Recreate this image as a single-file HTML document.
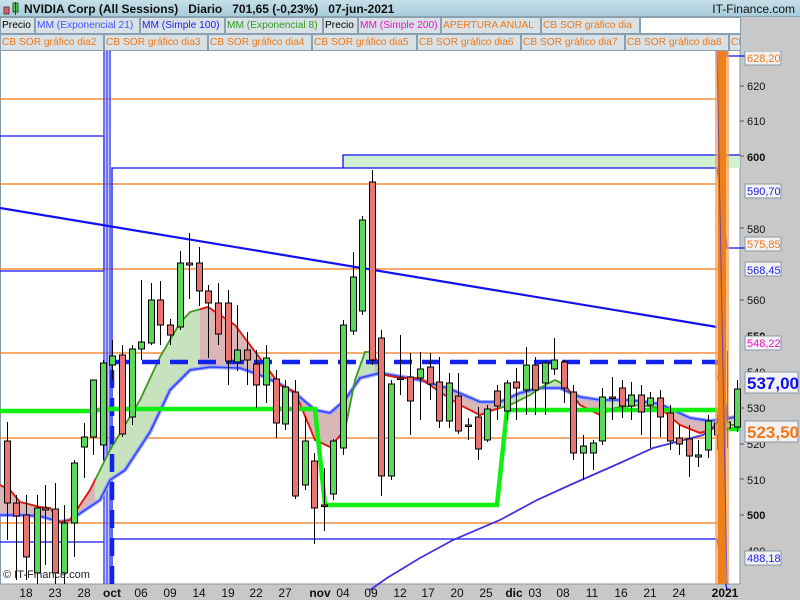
<!DOCTYPE html>
<html><head><meta charset="utf-8"><style>
*{margin:0;padding:0;box-sizing:border-box}
body{width:800px;height:600px;overflow:hidden;background:#fff;font-family:"Liberation Sans",sans-serif;position:relative}
#hdr{position:absolute;left:0;top:0;width:800px;height:17px;background:linear-gradient(#c6e0ea,#a9cbd9);border-bottom:1px solid #8aa3b0}
#hdr .t{position:absolute;left:24px;top:2px;font-size:12px;color:#111;white-space:pre}
#hdr .r{position:absolute;right:5px;top:2px;font-size:12px;color:#111}
.row{position:absolute;left:0;height:17px;width:800px;background:#c8c8c8}
.c{position:absolute;top:0;height:17px;border:1px solid #8aa0b0;background:#d8e2e6;font-size:10.2px;line-height:15px;padding-left:1px;white-space:nowrap;overflow:hidden}
.o{color:#f07818}
</style></head><body>
<div id="hdr">
<svg style="position:absolute;left:3px;top:2px" width="18" height="14"><rect x="1" y="5" width="5" height="7" fill="#e06060" stroke="#333" stroke-width="0.8"/><rect x="10" y="1" width="5" height="9" fill="#44cc44" stroke="#333" stroke-width="0.8"/><line x1="12.5" y1="0" x2="12.5" y2="13" stroke="#333"/></svg>
<div class="t"><b style="font-weight:600">NVIDIA Corp (All Sessions)   Diario   701,65 (-0,23%)   07-jun-2021</b></div>
<div class="r">IT-Finance.com</div></div>
<div class="row" style="top:17px">
<div class="c" style="left:0;width:35px">Precio</div>
<div class="c" style="left:35px;width:105px;color:#4455ff">MM (Exponencial 21)</div>
<div class="c" style="left:140px;width:85px;color:#2222ee">MM (Simple 100)</div>
<div class="c" style="left:225px;width:98px;color:#339922">MM (Exponencial 8)</div>
<div class="c" style="left:323px;width:35px">Precio</div>
<div class="c" style="left:358px;width:83px;color:#ee11cc">MM (Simple 200)</div>
<div class="c o" style="left:441px;width:100px">APERTURA ANUAL</div>
<div class="c o" style="left:541px;width:99px">CB SOR gráfico dia</div>
<div class="c" style="left:640px;width:101px;background:#fff"></div>
</div>
<div class="row" style="top:34px">
<div class="c o" style="left:0;width:104px">CB SOR gráfico dia2</div>
<div class="c o" style="left:104px;width:104px">CB SOR gráfico dia3</div>
<div class="c o" style="left:208px;width:104px">CB SOR gráfico dia4</div>
<div class="c o" style="left:312px;width:105px">CB SOR gráfico dia5</div>
<div class="c o" style="left:417px;width:104px">CB SOR gráfico dia6</div>
<div class="c o" style="left:521px;width:104px">CB SOR gráfico dia7</div>
<div class="c o" style="left:625px;width:104px">CB SOR gráfico dia8</div>
<div class="c o" style="left:729px;width:12px">CB</div>
</div>
<svg id="ch" style="position:absolute;left:0;top:51px" width="800" height="549" viewBox="0 51 800 549" font-family="Liberation Sans, sans-serif">
<rect x="740" y="51" width="60" height="549" fill="#c8c8c8"/>
<rect x="0" y="584" width="800" height="16" fill="#c8c8c8"/>
<line x1="740" y1="51" x2="740" y2="584" stroke="#8899a6"/>
<line x1="0" y1="584" x2="740" y2="584" stroke="#8899a6"/>
<line x1="0.5" y1="51" x2="0.5" y2="584" stroke="#8899a6"/>
<rect x="343" y="155" width="397" height="13" fill="#d0f2d2"/>
<g stroke="#f07818" stroke-width="1.2"><line x1="0" y1="99" x2="717" y2="99"/><line x1="0" y1="184" x2="717" y2="184"/><line x1="0" y1="269" x2="717" y2="269"/><line x1="0" y1="353" x2="717" y2="353"/><line x1="0" y1="438" x2="717" y2="438"/><line x1="0" y1="523" x2="717" y2="523"/></g>
<g stroke="#1111ee" stroke-width="1.3" fill="none">
<polyline points="0,136 104,136 104,271 0,271"/>
<line x1="0" y1="542" x2="104" y2="542"/>
<polyline points="112,584 112,168 717,168 727,248 745,248"/>
<polyline points="343,168 343,155 740,155"/>
<polyline points="112,539 717,539 727,590"/>
<polyline points="727,51 727,56 745,56"/>
</g>
<rect x="103" y="51" width="8" height="533" fill="#8890ff" opacity="0.5"/>
<g stroke="#2222ee" stroke-width="1"><line x1="104" y1="51" x2="104" y2="584"/><line x1="107" y1="51" x2="107" y2="584"/><line x1="110" y1="51" x2="110" y2="584"/></g>
<line x1="0" y1="208" x2="717" y2="327" stroke="#1111ee" stroke-width="2.2"/>
<clipPath id="rc"><rect x="0" y="0" width="95" height="600"/><rect x="200" y="0" width="140" height="600"/><rect x="375" y="0" width="125" height="600"/><rect x="565" y="0" width="40" height="600"/><rect x="660" y="0" width="60" height="600"/></clipPath>
<polygon fill="#c6e3bd" points="0,485 10,490 20,502 40,507 50,508 60,522 70,520 90,490 110,450 125,425 140,400 160,357 170,340 180,323 190,312 208,307 220,315 235,325 250,345 265,365 280,385 295,392 315,440 330,447 345,430 355,380 365,352 372,352 385,375 400,378 420,378 440,392 460,405 480,415 490,411 510,405 530,395 545,385 555,380 565,385 580,405 600,415 615,408 640,405 660,408 680,425 700,433 710,430 720,425 740,425 740,416 730,418 710,421 690,418 660,404 630,400 600,400 580,397 560,388 540,388 520,393 500,402 480,402 450,389 420,380 380,373 360,378 345,400 330,413 315,410 295,393 280,384 260,375 240,368 210,367 190,370 170,390 150,432 125,470 110,480 100,500 70,520 60,522 40,516 20,515 0,515"/>
<polygon clip-path="url(#rc)" fill="#d9b7b7" points="0,485 10,490 20,502 40,507 50,508 60,522 70,520 90,490 110,450 125,425 140,400 160,357 170,340 180,323 190,312 208,307 220,315 235,325 250,345 265,365 280,385 295,392 315,440 330,447 345,430 355,380 365,352 372,352 385,375 400,378 420,378 440,392 460,405 480,415 490,411 510,405 530,395 545,385 555,380 565,385 580,405 600,415 615,408 640,405 660,408 680,425 700,433 710,430 720,425 740,425 740,416 730,418 710,421 690,418 660,404 630,400 600,400 580,397 560,388 540,388 520,393 500,402 480,402 450,389 420,380 380,373 360,378 345,400 330,413 315,410 295,393 280,384 260,375 240,368 210,367 190,370 170,390 150,432 125,470 110,480 100,500 70,520 60,522 40,516 20,515 0,515"/>
<polyline fill="none" stroke="#9aa6ff" stroke-width="4" points="0,515 20,515 40,516 60,522 70,520 100,500 110,480 125,470 150,432 170,390 190,370 210,367 240,368 260,375 280,384 295,393 315,410 330,413 345,400 360,378 380,373 420,380 450,389 480,402 500,402 520,393 540,388 560,388 580,397 600,400 630,400 660,404 690,418 710,421 730,418 740,416"/>
<polyline fill="none" stroke="#3344ff" stroke-width="1.6" points="0,515 20,515 40,516 60,522 70,520 100,500 110,480 125,470 150,432 170,390 190,370 210,367 240,368 260,375 280,384 295,393 315,410 330,413 345,400 360,378 380,373 420,380 450,389 480,402 500,402 520,393 540,388 560,388 580,397 600,400 630,400 660,404 690,418 710,421 730,418 740,416"/>
<polyline fill="none" stroke="#3a9a1a" stroke-width="1.8" points="0,485 10,490 20,502 40,507 50,508 60,522 70,520 90,490 110,450 125,425 140,400 160,357 170,340 180,323 190,312 208,307 220,315 235,325 250,345 265,365 280,385 295,392 315,440 330,447 345,430 355,380 365,352 372,352 385,375 400,378 420,378 440,392 460,405 480,415 490,411 510,405 530,395 545,385 555,380 565,385 580,405 600,415 615,408 640,405 660,408 680,425 700,433 710,430 720,425 740,425"/>
<polyline clip-path="url(#rc)" fill="none" stroke="#ee1111" stroke-width="1.8" points="0,485 10,490 20,502 40,507 50,508 60,522 70,520 90,490 110,450 125,425 140,400 160,357 170,340 180,323 190,312 208,307 220,315 235,325 250,345 265,365 280,385 295,392 315,440 330,447 345,430 355,380 365,352 372,352 385,375 400,378 420,378 440,392 460,405 480,415 490,411 510,405 530,395 545,385 555,380 565,385 580,405 600,415 615,408 640,405 660,408 680,425 700,433 710,430 720,425 740,425"/>
<polyline fill="none" stroke="#4433dd" stroke-width="1.8" points="370,590 387,578 420,558 453,540 500,520 537,500 570,485 620,463 653,448 703,435 720,422"/>
<polyline fill="none" stroke="#1122ee" stroke-width="4.5" stroke-dasharray="18,10" points="112,584 112,362 717,362 727,420"/>
<polyline fill="none" stroke="#11ee11" stroke-width="4.5" points="0,411 95,411 102,409 315,409 325,505 497,505 507,410 717,410 727,429 740,429"/>
<g id="cd" stroke="#000" stroke-width="1"></g>
<rect x="715" y="51" width="14" height="533" fill="#f4a050" opacity="0.7"/>
<rect x="718" y="51" width="8" height="533" fill="#ef7f1a"/>
<line x1="717" y1="51" x2="727" y2="584" stroke="#2222ee" stroke-width="1" opacity="0.6"/>
<g font-size="11" fill="#111" text-anchor="start">
<text x="747" y="90">620</text><text x="747" y="125">610</text><text x="747" y="161" font-weight="bold">600</text>
<text x="747" y="233">580</text><text x="747" y="304">560</text><text x="747" y="340" font-weight="bold">550</text>
<text x="747" y="376">540</text><text x="747" y="412">530</text><text x="747" y="448">520</text>
<text x="747" y="484">510</text><text x="747" y="519" font-weight="bold">500</text><text x="747" y="555">490</text>
</g>
<g stroke="#556" stroke-width="1"><line x1="740" y1="86" x2="744" y2="86"/><line x1="740" y1="121" x2="744" y2="121"/><line x1="740" y1="156" x2="744" y2="156"/><line x1="740" y1="228" x2="744" y2="228"/><line x1="740" y1="300" x2="744" y2="300"/><line x1="740" y1="408" x2="744" y2="408"/><line x1="740" y1="444" x2="744" y2="444"/><line x1="740" y1="479" x2="744" y2="479"/><line x1="740" y1="515" x2="744" y2="515"/></g>
<g font-size="11" stroke="#8899a6" stroke-width="1">
<rect x="745" y="51" width="36" height="14" fill="#f2f2f2"/><text x="747" y="62" fill="#f07818" stroke="none">628,20</text>
<rect x="745" y="184" width="36" height="14" fill="#f2f2f2"/><text x="747" y="195" fill="#2222ee" stroke="none">590,70</text>
<rect x="745" y="237" width="36" height="14" fill="#f2f2f2"/><text x="747" y="248" fill="#f07818" stroke="none">575,85</text>
<rect x="745" y="262" width="36" height="14" fill="#f2f2f2"/><text x="747" y="274" fill="#2222ee" stroke="none">568,45</text>
<rect x="745" y="336" width="36" height="14" fill="#f2f2f2"/><text x="747" y="347" fill="#ee11cc" stroke="none">548,22</text>
<rect x="745" y="551" width="36" height="14" fill="#f2f2f2"/><text x="747" y="562" fill="#2222ee" stroke="none">488,18</text>
<rect x="745" y="372" width="53" height="21" fill="#f2f2f2"/><text x="747" y="389" fill="#1111ee" stroke="none" font-size="17" font-weight="bold">537,00</text>
<rect x="745" y="421" width="53" height="21" fill="#f2f2f2"/><text x="747" y="438" fill="#f07818" stroke="none" font-size="17" font-weight="bold">523,50</text>
</g>
<g font-size="12" fill="#111" text-anchor="middle">
<text x="26" y="597">18</text><text x="55" y="597">23</text><text x="84" y="597">28</text><text x="112" y="597" font-weight="bold">oct</text>
<text x="141" y="597">06</text><text x="170" y="597">09</text><text x="199" y="597">14</text><text x="228" y="597">19</text>
<text x="256" y="597">22</text><text x="285" y="597">27</text><text x="320" y="597" font-weight="bold">nov</text><text x="343" y="597">04</text>
<text x="371" y="597">09</text><text x="400" y="597">12</text><text x="428" y="597">17</text><text x="457" y="597">20</text>
<text x="486" y="597">25</text><text x="514" y="597" font-weight="bold">dic</text><text x="535" y="597">03</text><text x="563" y="597">08</text>
<text x="592" y="597">11</text><text x="621" y="597">16</text><text x="650" y="597">21</text><text x="679" y="597">24</text>
<text x="725" y="597" font-weight="bold">2021</text>
</g>
<text x="3" y="578" font-size="11" fill="#222">© IT-Finance.com</text>
</svg>
<script>
var d=[[7,441,503,422,540],[16,503,516,495,580],[26,515,557,495,580],[37,573,508,495,584],[45,508,510,485,565],[55,509,573,483,584],[64,573,523,505,584],[74,523,463,460,557],[84,447,437,423,478],[93,437,380,380,455],[103,445,363,360,460],[112,365,356,340,380],[122,355,434,345,437],[132,417,349,345,425],[141,349,342,280,360],[151,343,300,283,345],[160,300,325,281,345],[170,325,335,319,345],[180,327,263,251,330],[189,263,265,233,299],[199,263,291,247,306],[208,291,303,285,358],[218,303,334,283,345],[228,303,361,290,385],[237,362,350,305,371],[247,350,360,332,385],[256,364,385,350,408],[266,385,358,345,403],[276,379,423,370,438],[285,424,387,380,430],[295,392,496,380,499],[305,485,441,416,490],[314,461,508,453,544],[324,505,506,468,531],[333,494,441,439,500],[343,448,325,320,455],[353,331,277,252,335],[362,311,220,216,315],[372,182,360,170,365],[381,338,476,330,496],[391,476,384,380,480],[400,378,379,335,395],[410,377,401,353,435],[420,378,369,352,420],[430,367,384,353,400],[439,382,421,357,428],[449,421,383,373,428],[458,396,431,373,434],[468,425,426,418,440],[478,417,449,407,460],[487,440,409,405,442],[497,391,406,385,420],[507,411,383,380,420],[516,382,388,368,420],[526,390,365,347,415],[535,365,390,357,415],[545,383,363,360,415],[554,369,360,338,375],[564,362,388,360,403],[573,392,453,385,460],[583,453,446,435,480],[593,453,443,440,470],[602,441,397,388,445],[612,397,398,377,420],[622,388,406,380,418],[631,406,395,382,420],[641,395,412,385,435],[650,405,398,392,448],[660,398,417,390,437],[670,413,441,405,450],[679,438,444,425,455],[689,439,456,425,477],[698,457,455,440,467],[708,450,421,415,458],[717,423,435,415,450],[727,428,422,351,448],[737,427,389,380,432]];
var g=document.getElementById('cd'),s='';
d.forEach(function(c){var x=c[0],o=c[1],cl=c[2],up=cl<o,t=Math.min(o,cl),h=Math.max(1.5,Math.abs(o-cl));
s+='<line x1="'+(x+0.5)+'" y1="'+c[3]+'" x2="'+(x+0.5)+'" y2="'+c[4]+'"/><rect x="'+(x-2.5)+'" y="'+t+'" width="6" height="'+h+'" fill="'+(up?'#5ad85a':'#e87474')+'"/>';});
g.innerHTML=s;
</script>
</body></html>
